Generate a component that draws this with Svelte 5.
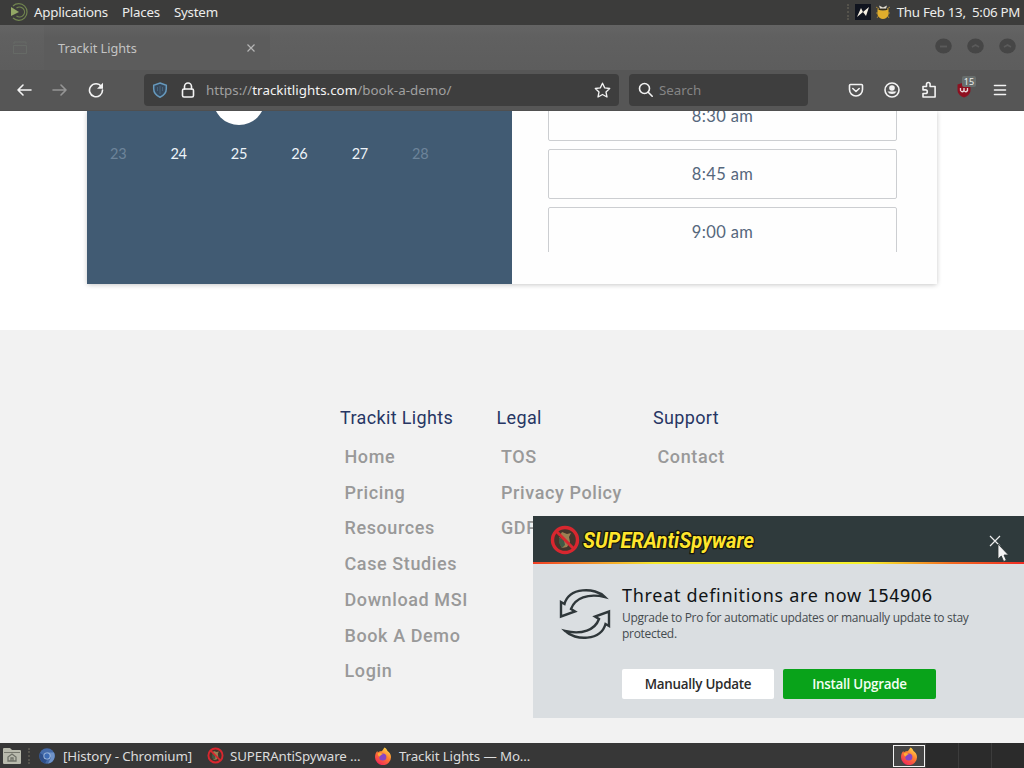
<script lang="ts">
  const menus = ['Applications', 'Places', 'System'];

  const days = [
    { day: 23, open: false },
    { day: 24, open: true },
    { day: 25, open: true },
    { day: 26, open: true },
    { day: 27, open: true },
    { day: 28, open: false },
  ];

  const slots = ['8:30 am', '8:45 am', '9:00 am'];

  const columns = [
    {
      title: 'Trackit Lights',
      links: ['Home', 'Pricing', 'Resources', 'Case Studies', 'Download MSI', 'Book A Demo', 'Login'],
    },
    { title: 'Legal', links: ['TOS', 'Privacy Policy', 'GDPR'] },
    { title: 'Support', links: ['Contact'] },
  ];

  let popupOpen = $state(true);
</script>

{#snippet firefox()}
  <svg width="18" height="18" viewBox="0 0 18 18">
    <defs>
      <linearGradient id="fx" x1="0.8" y1="0" x2="0.2" y2="1">
        <stop offset="0" stop-color="#ffe14a" />
        <stop offset="0.45" stop-color="#ff7b30" />
        <stop offset="1" stop-color="#f0205c" />
      </linearGradient>
    </defs>
    <path
      fill="url(#fx)"
      d="M10.5 0.5c2 1 2.6 2.400 3 3.600 1.600 1 3.500 2.900 3.500 6A8 8 0 0 1 1 10.200C1 7.600 2 5.500 3.300 4.100l.5 1.500C5 4.300 6.500 4 7.500 4.200 9 3.400 9.300 2 10.500.5z"
    />
    <circle cx="8.800" cy="10" r="3.600" fill="#8745c4" />
    <path fill="#ffad35" d="M3.800 6.500c1.700-.8 3.500-.3 5 .8-1.200.3-2.500 1-3 2.200C4.400 9.400 3.700 8 3.800 6.500z" />
  </svg>
{/snippet}

{#snippet sasLogo(size: number)}
  <svg width={size} height={size} viewBox="0 0 30 30">
    <circle cx="15" cy="15" r="12" fill="#42352c" />
    <path fill="#9b7f53" d="M12 7l5 2 4-1-2 4 1 5-3 5-5 1-2-4 2-4-3-3z" />
    <path fill="#405a45" d="M9 13l5 2 1 5-3 3-3-5z" />
    <path stroke="#181b1a" d="M9 11l5 4" />
    <circle cx="15" cy="15" r="12.500" fill="none" stroke="#d8272f" stroke-width="3.400" />
    <path stroke="#d8272f" stroke-width="3" d="M6.500 6.500l17 17" />
  </svg>
{/snippet}

<div class="desktop">
  <header class="panel">
    <svg class="mint" width="20" height="20" viewBox="0 0 20 20">
      <path fill="#93a865" d="M2 5l8 5-8 4z" />
      <path
        fill="none"
        stroke="#71854f"
        stroke-width="1.200"
        d="M4 4a8.300 8.300 0 1 1 0 12M7.500 6a5 5 0 1 1 0 8"
      />
    </svg>
    {#each menus as menu}
      <span class="menu">{menu}</span>
    {/each}
    <div class="tray">
      <i class="grip"></i>
      <svg width="16" height="16" viewBox="0 0 16 16">
        <rect width="16" height="16" fill="#10141f" />
        <path fill="#f5efe2" d="M2 13l4-9 2 4 6-5-3 9-3-4z" />
      </svg>
      <svg width="16" height="16" viewBox="0 0 16 16">
        <path fill="none" stroke="#a98635" d="M4 5L1 3m3 6H1m3 2l-2 3m10-9l3-2m-3 6h3m-3 2l2 3" />
        <path fill="#e0ad2c" d="M2.500 5q5.500 3 11 0v6q-2 4-5.500 4t-5.500-4z" />
        <path fill="#e5dfd2" d="M4 1.500l4 2 4-2-1 3H5z" />
        <path stroke="#332c17" d="M4 5.500h8" />
      </svg>
      <span class="clock">Thu Feb 13,&nbsp; 5:06 PM</span>
    </div>
  </header>

  <div class="tabs">
    <svg class="view" width="16" height="16" viewBox="0 0 16 16">
      <path fill="none" stroke="#666a66" d="M2 4V2h12v2M1.500 5.500h13v8h-13z" />
    </svg>
    <div class="tab">
      <span>Trackit Lights</span>
      <svg width="10" height="10" viewBox="0 0 10 10">
        <path stroke="#b5b5b5" stroke-width="1.200" d="M1.500 1.500l7 7m0-7l-7 7" />
      </svg>
    </div>
    <div class="controls">
      {#each ['M5 8.500h7', 'M5 9l3.500-2L12 9', 'M5 9l3.500-2L12 9'] as d}
        <svg width="17" height="16" viewBox="0 0 17 16">
          <ellipse cx="8.500" cy="8" rx="8.300" ry="7.500" fill="#464646" />
          <path fill="none" stroke="#5a5a5a" stroke-width="1.800" {d} />
        </svg>
      {/each}
    </div>
  </div>

  <div class="toolbar">
    <svg class="back" width="16" height="16" viewBox="0 0 16 16">
      <path class="line" d="M15 8H2m5-5L2 8l5 5" />
    </svg>
    <svg class="forward" width="16" height="16" viewBox="0 0 16 16">
      <path class="line" d="M1 8h13M9 3l5 5-5 5" />
    </svg>
    <svg class="reload" width="16" height="16" viewBox="0 0 16 16">
      <path class="line" d="M13.300 4.500A6.500 6.500 0 1 0 14.500 8" />
      <path fill="#f3f3f3" d="M15 .8v6H9z" />
    </svg>
    <div class="url">
      <svg width="16" height="16" viewBox="0 0 16 16">
        <path fill="#37485a" stroke="#6699bd" stroke-width="1.500" d="M8 1l6.300 2.200v3.500c0 3.800-3 7-6.300 8.500-3.300-1.500-6.300-4.700-6.300-8.500V3.200z" />
        <path stroke="#6699bd" d="M8 4v8M5.500 5v4M10.500 5v4" opacity="0.35" />
      </svg>
      <svg class="lock" width="14" height="16" viewBox="0 0 14 16">
        <rect class="line" x="1.500" y="7" width="11" height="8" rx="1.500" />
        <path class="line" d="M3.500 7V4.500a3.500 3.500 0 0 1 7 0V7" />
      </svg>
      <span class="address">https://<b>trackitlights.com</b>/book-a-demo/</span>
      <svg class="star" width="17" height="16" viewBox="0 0 17 16">
        <path class="line thin" d="M8.500 1.200l2.200 4.700 5 .6-3.700 3.500 1 5-4.500-2.500L4 15l1-5-3.700-3.500 5-.6z" />
      </svg>
    </div>
    <div class="search">
      <svg width="16" height="16" viewBox="0 0 16 16">
        <circle class="line" cx="6.500" cy="6.500" r="5" />
        <path class="line" d="M10.200 10.200l4 4" />
      </svg>
      <span>Search</span>
    </div>
    <div class="tools">
      <svg width="16" height="16" viewBox="0 0 16 16">
        <path class="line" d="M2.500 2.500h11q1 0 1 1V7.500a6.500 6.500 0 0 1-13 0v-4q0-1 1-1z" />
        <path class="line" d="M4.800 6.500L8 9.500l3.200-3" />
      </svg>
      <svg width="16" height="16" viewBox="0 0 16 16">
        <circle class="line" cx="8" cy="8" r="7" />
        <circle fill="#f3f3f3" cx="8" cy="6" r="2.800" />
        <path fill="#f3f3f3" d="M3.500 9.500h9a5 4.500 0 0 1-9 0z" />
      </svg>
      <svg width="16" height="18" viewBox="0 0 16 18">
        <path
          class="line"
          d="M5.500 5.500V3.300a1.800 1.800 0 0 1 3.600 0v2.200h5V16H2v-3.500h2.500a1.800 1.800 0 0 0 0-3.600H2V5.500z"
        />
      </svg>
      <div class="ublock">
        <svg width="16" height="16" viewBox="0 0 16 16">
          <path fill="#8e1020" d="M7 .5l6.500 2V8c0 4-3.500 6.500-6.500 7.500C4 14.500.5 12 .5 8V2.500z" />
          <path fill="none" stroke="#eadadd" stroke-width="1.300" d="M3.500 6v2.500q1.700 2.500 3.500 0V6m0 2.500q1.700 2.500 3.500 0V6" />
        </svg>
        <span class="badge">15</span>
      </div>
      <svg width="14" height="16" viewBox="0 0 14 16">
        <path class="line" d="M1.500 3.500h11M1.500 8h11M1.500 12.500h11" />
      </svg>
    </div>
  </div>

  <main>
    <section class="booking">
      <div class="calendar">
        <div class="week previous">
          <i class="selected"></i>
        </div>
        <div class="week">
          {#each days as { day, open }}
            <span class:closed={!open}>{day}</span>
          {/each}
        </div>
      </div>
      <div class="times">
        <div class="slots">
          {#each slots as slot}
            <div class="slot">{slot}</div>
          {/each}
        </div>
      </div>
    </section>

    <footer>
      {#each columns as column}
        <div class="column">
          <h4>{column.title}</h4>
          {#each column.links as link}
            <div class="link">{link}</div>
          {/each}
        </div>
      {/each}
    </footer>
  </main>

  <div class="taskbar">
    <svg class="files" width="20" height="20" viewBox="0 0 20 20">
      <path fill="#b9baad" d="M1 3q0-1 1-1h6l2 2h8q1 0 1 1v12q0 1-1 1H2q-1 0-1-1z" />
      <path stroke="#77786e" d="M2 6.500h16" />
      <path fill="none" stroke="#6f7168" stroke-width="1.300" d="M6 15v-4l4-3 4 3v4zM9 15v-3h2v3" />
    </svg>
    <i class="grip"></i>
    <div class="task chromium">
      <svg width="16" height="16" viewBox="0 0 16 16">
        <circle cx="8" cy="8" r="7.800" fill="#456ba9" />
        <path fill="#2e4f8a" d="M1 5a7.800 7.800 0 0 0 5 10.500L9 10z" />
        <path fill="#6f93c9" d="M8 4.500h7a7.800 7.800 0 0 1-6 11l3-6z" />
        <circle cx="8" cy="8" r="3.600" fill="#a9c0e0" />
        <circle cx="8" cy="8" r="2.700" fill="#3d6bb4" />
      </svg>
      <span>[History - Chromium]</span>
    </div>
    <div class="task sas">
      {@render sasLogo(17)}
      <span>SUPERAntiSpyware …</span>
    </div>
    <div class="task page">
      {@render firefox()}
      <span>Trackit Lights — Mo…</span>
    </div>
    <div class="workspaces">
      <div class="active">{@render firefox()}</div>
      <div></div>
      <div></div>
      <div></div>
    </div>
  </div>

  {#if popupOpen}
    <aside class="popup">
      <div class="brand">
        {@render sasLogo(30)}
        <svg class="wordmark" width="180" height="40" viewBox="0 0 180 40">
          <text x="3" y="28" textLength="171" lengthAdjust="spacingAndGlyphs">SUPERAntiSpyware</text>
        </svg>
        <button aria-label="Close" onclick={() => (popupOpen = false)}>
          <svg width="12" height="12" viewBox="0 0 12 12">
            <path stroke="#eee" stroke-width="1.200" d="M1 1l10 10M11 1L1 11" />
          </svg>
        </button>
      </div>
      <div class="message">
        <svg class="refresh" width="52" height="52" viewBox="0 0 52 52">
          <g id="arrow" fill="none" stroke="#2f373a" stroke-width="2.400">
            <path d="M46 9C36-1 10-1 5.500 16L2 14v14.500L16 23.500l-4-2.500C16 10 29 5 46 9z" />
          </g>
          <use href="#arrow" transform="rotate(180 26 26)" />
        </svg>
        <div class="copy">
          <h3>Threat definitions are now <b>154906</b></h3>
          <p>Upgrade to Pro for automatic updates or manually update to stay protected.</p>
          <div class="actions">
            <button class="manual">Manually Update</button>
            <button class="install">Install Upgrade</button>
          </div>
        </div>
      </div>
    </aside>
  {/if}

  <svg class="cursor" width="12" height="20" viewBox="0 0 12 20">
    <path fill="#f4f4f4" stroke="#2b3334" stroke-width="0.800" d="M1 1v15l3.300-3 2.400 5.500 2.600-1.200L7 12h4.500z" />
  </svg>
</div>

<style>
  :global(body) {
    margin: 0;
  }

  .desktop {
    position: relative;
    display: flex;
    flex-direction: column;
    width: 1024px;
    height: 768px;
    overflow: hidden;
    font-family: 'Noto Sans', sans-serif;
    font-size: 13.33px;
    background: #fff;
  }

  svg {
    display: block;
    flex: none;
  }

  span {
    white-space: nowrap;
  }

  button {
    border: 0;
    font-family: inherit;
  }

  .line {
    fill: none;
    stroke: #f3f3f3;
    stroke-width: 1.6;
    stroke-linecap: round;
    stroke-linejoin: round;
  }

  .thin {
    stroke-width: 1.3;
  }

  .panel {
    display: flex;
    align-items: center;
    flex: none;
    height: 25px;
    padding: 0 0 2px 9px;
    box-sizing: border-box;
    letter-spacing: -0.22px;
    color: #ededeb;
    background: #3c3c3b;
  }

  .mint {
    margin-right: 5px;
  }

  .menu {
    margin-right: 14px;
  }

  .tray {
    display: flex;
    align-items: center;
    gap: 4px;
    margin-left: auto;
    padding-right: 4px;
  }

  .grip {
    width: 0;
    height: 16px;
    margin-right: 2px;
    border-left: 2px dotted #55534c;
  }

  .clock {
    margin-left: 2px;
    letter-spacing: -0.3px;
  }

  .tabs {
    display: flex;
    align-items: center;
    flex: none;
    height: 45px;
    background: linear-gradient(#646464, #606060 12px, #5d5d5d);
  }

  .view {
    margin-left: 12px;
  }

  .tab {
    display: flex;
    align-items: center;
    justify-content: space-between;
    width: 198px;
    height: 100%;
    padding: 0 14px;
    margin-left: 16px;
    font-size: 12.7px;
    color: #c4c4c4;
    background: linear-gradient(#626262, #5c5c5c 12px);
  }

  .controls {
    display: flex;
    gap: 15px;
    margin-left: auto;
    padding: 0 8px 4px 0;
  }

  .toolbar {
    display: flex;
    align-items: center;
    flex: none;
    height: 41px;
    box-sizing: border-box;
    border-bottom: 1px solid #505050;
    background: #565656;
  }

  .back {
    margin-left: 16px;
  }

  .forward {
    margin-left: 20px;
    opacity: 0.4;
  }

  .reload {
    margin-left: 20px;
  }

  .url,
  .search {
    display: flex;
    align-items: center;
    height: 32px;
    box-sizing: border-box;
    border-radius: 4px;
    color: #a0a0a0;
    background: #3e3e3e;
  }

  .url {
    width: 475px;
    margin-left: 40px;
    padding: 0 8px;
  }

  .lock {
    margin-left: 13px;
  }

  .address {
    margin-left: 11px;
    letter-spacing: 0.04px;
  }

  .address b {
    font-weight: 400;
    color: #f3f3f3;
  }

  .star {
    margin-left: auto;
  }

  .search {
    width: 179px;
    margin-left: 10px;
    padding-left: 9px;
    gap: 5px;
    color: #858585;
  }

  .tools {
    display: flex;
    align-items: center;
    justify-content: space-between;
    width: 159px;
    margin-left: auto;
    padding-right: 17px;
  }

  .ublock {
    position: relative;
  }

  .badge {
    position: absolute;
    top: -6px;
    left: 5px;
    padding: 0 2px;
    border-radius: 2px;
    font-size: 9px;
    line-height: 11px;
    color: #eee;
    background: #686e6d;
  }

  main {
    display: flex;
    flex-direction: column;
    flex: none;
    height: 632px;
    overflow: hidden;
  }

  .booking {
    display: flex;
    flex: none;
    width: 850px;
    height: 173px;
    margin: 0 0 46px 87px;
    border-radius: 0 0 3px 3px;
    box-shadow: 0 1px 5px rgb(0 0 0 / 22%);
  }

  .calendar {
    width: 425px;
    font-family: Lato, sans-serif;
    font-size: 14.5px;
    color: #eef3f8;
    background: #415b73;
  }

  .week {
    display: grid;
    grid-template-columns: repeat(7, 60.4px);
    justify-items: center;
    padding: 6px 1px 0;
    line-height: 46px;
    letter-spacing: -0.3px;
  }

  .previous {
    grid-template-rows: 14px;
    align-items: end;
    height: 14px;
    padding-top: 0;
    overflow: hidden;
  }

  .selected {
    grid-column: 3;
    width: 52px;
    height: 52px;
    border-radius: 50%;
    background: #fff;
  }

  .closed {
    color: #6d849a;
  }

  .times {
    flex: 1;
    padding-left: 36px;
    background: #fefefe;
  }

  .slots {
    display: flex;
    flex-direction: column;
    justify-content: flex-start;
    width: 349px;
    height: 141px;
    overflow: hidden;
  }

  .slot {
    flex: none;
    height: 48px;
    margin-bottom: 8px;
    border: 1px solid #ccced1;
    border-radius: 2px;
    font-family: Lato, sans-serif;
    font-size: 16.5px;
    line-height: 49px;
    letter-spacing: 0.35px;
    text-align: center;
    color: #55677c;
  }

  /* the list is scrolled part of the way past its first slot */
  .slot:first-child {
    margin-top: -20px;
  }

  footer {
    display: flex;
    flex: 1;
    box-sizing: border-box;
    padding: 77px 0 0 340px;
    font-family: Roboto, sans-serif;
    background: #f2f2f2;
  }

  .column {
    width: 156.5px;
  }

  h4 {
    margin: 0 0 10px;
    font-size: 18px;
    font-weight: 400;
    line-height: 22px;
    letter-spacing: 0.35px;
    color: #273664;
  }

  .link {
    padding-left: 4.5px;
    font-size: 18px;
    font-weight: 500;
    line-height: 35.7px;
    letter-spacing: 0.6px;
    color: #999;
  }

  .taskbar {
    display: flex;
    align-items: center;
    flex: none;
    height: 25px;
    letter-spacing: -0.12px;
    color: #dcdcdc;
    background: #373737;
  }

  .files {
    margin: 0 6px 0 2px;
  }

  .task {
    display: flex;
    align-items: center;
    gap: 8px;
    width: 159px;
    padding-left: 7px;
  }

  .sas {
    gap: 6px;
    padding-left: 9px;
  }

  .page {
    padding-left: 8px;
    gap: 7px;
  }

  .workspaces {
    display: flex;
    height: 100%;
    margin-left: auto;
  }

  .workspaces div {
    width: 32px;
    border-left: 1px solid #3c3c3c;
    background: #2b2b2b;
  }

  .workspaces .active {
    display: flex;
    align-items: center;
    justify-content: center;
    width: 30px;
    height: 20px;
    margin: 2px 0;
    border: 1px solid #f2f2f2;
    background: #454545;
  }

  .popup {
    position: absolute;
    top: 516px;
    left: 533px;
    width: 491px;
    height: 202px;
    background: #dadee1;
  }

  .brand {
    display: flex;
    align-items: center;
    height: 48px;
    box-sizing: border-box;
    padding: 2px 23px 0 17px;
    border-bottom: 2px solid;
    border-image: linear-gradient(90deg, #ef3b24, #f7ea2d 25%, #f7f32d 68%, #f26a21 85%, #ee2b24) 1;
    background: #2f3a3c;
  }

  .wordmark text {
    font-family: Roboto, sans-serif;
    font-size: 21.5px;
    font-style: italic;
    font-weight: 700;
    fill: #ffe52c;
    stroke: #14150c;
    stroke-width: 2.5px;
    paint-order: stroke;
  }

  .brand button {
    margin-left: auto;
    padding: 1px 0 0;
    background: none;
  }

  .message {
    display: flex;
    padding: 19px 0 0 26px;
  }

  .refresh {
    margin-top: 5px;
  }

  .copy {
    margin-left: 11px;
  }

  h3 {
    margin: 0;
    font-size: 18px;
    font-weight: 400;
    line-height: 25px;
    letter-spacing: 0.7px;
    white-space: nowrap;
    color: #101416;
  }

  h3 b {
    font-family: 'DejaVu Sans', sans-serif;
    font-size: 17px;
    font-weight: 400;
    letter-spacing: 0;
  }

  p {
    width: 360px;
    margin: 1px 0 0;
    font-family: 'Open Sans', sans-serif;
    font-size: 12px;
    line-height: 16px;
    letter-spacing: -0.3px;
    color: #454b4f;
  }

  .actions {
    display: flex;
    gap: 9px;
    margin-top: 27px;
  }

  .actions button {
    width: 152px;
    height: 30px;
    padding: 0 0 1px;
    border-radius: 2px;
    font-family: 'Open Sans', sans-serif;
    font-size: 13.4px;
    font-weight: 600;
    letter-spacing: -0.25px;
    color: #2b2b2b;
    background: #fff;
  }

  .actions .install {
    width: 153px;
    color: #f3fff3;
    background: #09a31a;
  }

  .cursor {
    position: absolute;
    top: 543px;
    left: 997px;
  }
</style>
